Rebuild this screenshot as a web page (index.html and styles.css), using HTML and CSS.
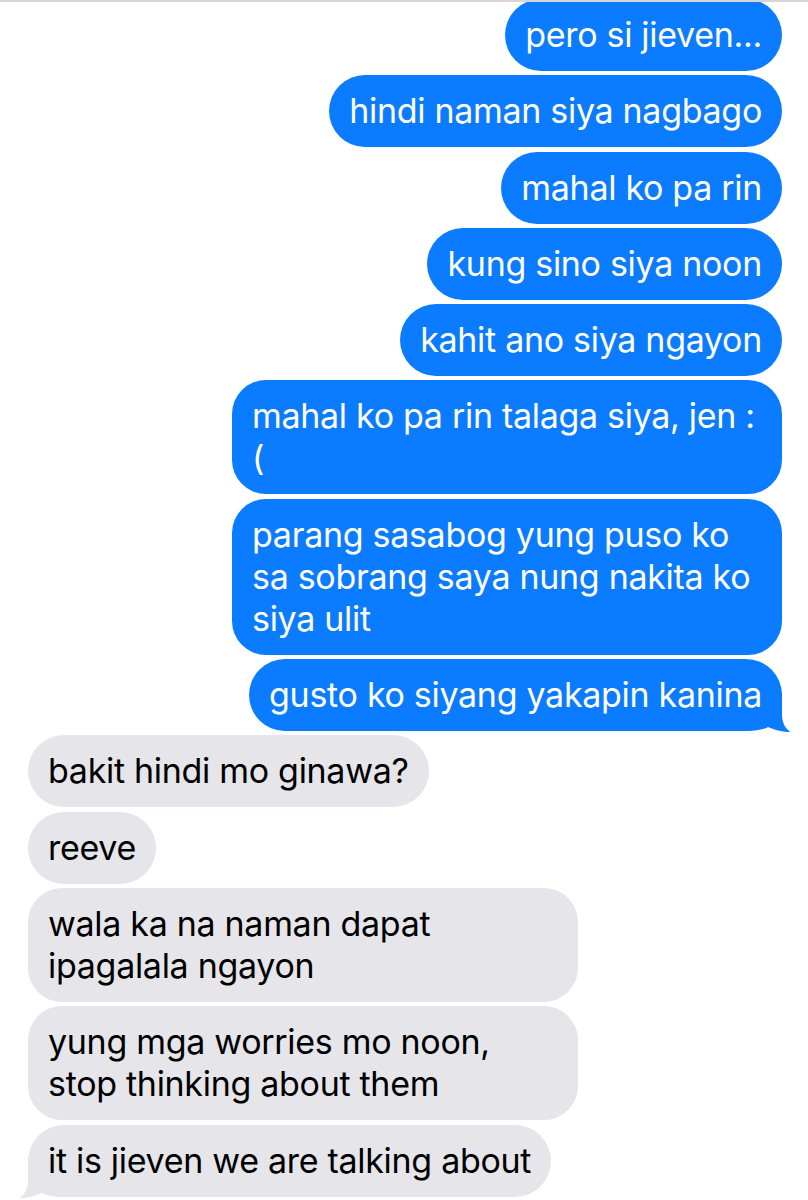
FILE: index.html
```html
<!DOCTYPE html>
<html>
<head>
<meta charset="utf-8">
<link rel="stylesheet" href="styles.css">
</head>
<body>
<div class="topline"></div>
<div class="chat">
  <div class="msg me">pero si jieven...</div>
  <div class="msg me">hindi naman siya nagbago</div>
  <div class="msg me">mahal ko pa rin</div>
  <div class="msg me">kung sino siya noon</div>
  <div class="msg me">kahit ano siya ngayon</div>
  <div class="msg me multi">mahal ko pa rin talaga siya, jen :<br>(</div>
  <div class="msg me multi">parang sasabog yung puso ko<br>sa sobrang saya nung nakita ko<br>siya ulit</div>
  <div class="msg me has-tail">gusto ko siyang yakapin kanina<svg class="tail" viewBox="0 0 45 40" width="45" height="40"><path d="M0 0 H36 V22 C36 31 39 36 44.5 40 C38 40 28 38 22 35 C19 37 12 39 0 39 Z"/></svg></div>
  <div class="msg them">bakit hindi mo ginawa?</div>
  <div class="msg them">reeve</div>
  <div class="msg them multi">wala ka na naman dapat<br>ipagalala ngayon</div>
  <div class="msg them multi">yung mga worries mo noon,<br>stop thinking about them</div>
  <div class="msg them has-tail">it is jieven we are talking about<svg class="tail" viewBox="0 0 45 40" width="45" height="40"><path d="M0 0 H36 V22 C36 31 39 36 44.5 40 C38 40 28 38 22 35 C19 37 12 39 0 39 Z"/></svg></div>
</div>
</body>
</html>
```
FILE: styles.css
```css
html, body {
  margin: 0;
  padding: 0;
  background: #ffffff;
}
body {
  width: 808px;
  height: 1200px;
  overflow: hidden;
  position: relative;
  font-family: "Inter", "Liberation Sans", sans-serif;
}
.topline {
  position: absolute;
  top: 0;
  left: 0;
  right: 0;
  height: 2px;
  background: #d6d6d6;
  z-index: 2;
}
.chat {
  display: flex;
  flex-direction: column;
  gap: 4.3px;
  margin-top: -1px;
  padding: 0 26px 0 28px;
}
.msg {
  position: relative;
  isolation: isolate;
  max-width: 550px;
  box-sizing: border-box;
  padding: 15px 20px;
  font-size: 34px;
  line-height: 42px;
  letter-spacing: -0.3px;
  border-radius: 36px;
  white-space: nowrap;
}
.multi {
  width: 550px;
  border-radius: 34px;
}
.me {
  align-self: flex-end;
  background: #0b7bff;
  color: #ffffff;
}
.them {
  align-self: flex-start;
  background: #e5e5ea;
  color: #000000;
}
.tail {
  position: absolute;
  bottom: -1px;
  display: block;
  z-index: -1;
}
.me .tail {
  right: -9px;
  fill: #0b7bff;
}
.them .tail {
  left: -9px;
  fill: #e5e5ea;
  transform: scaleX(-1);
}
```
